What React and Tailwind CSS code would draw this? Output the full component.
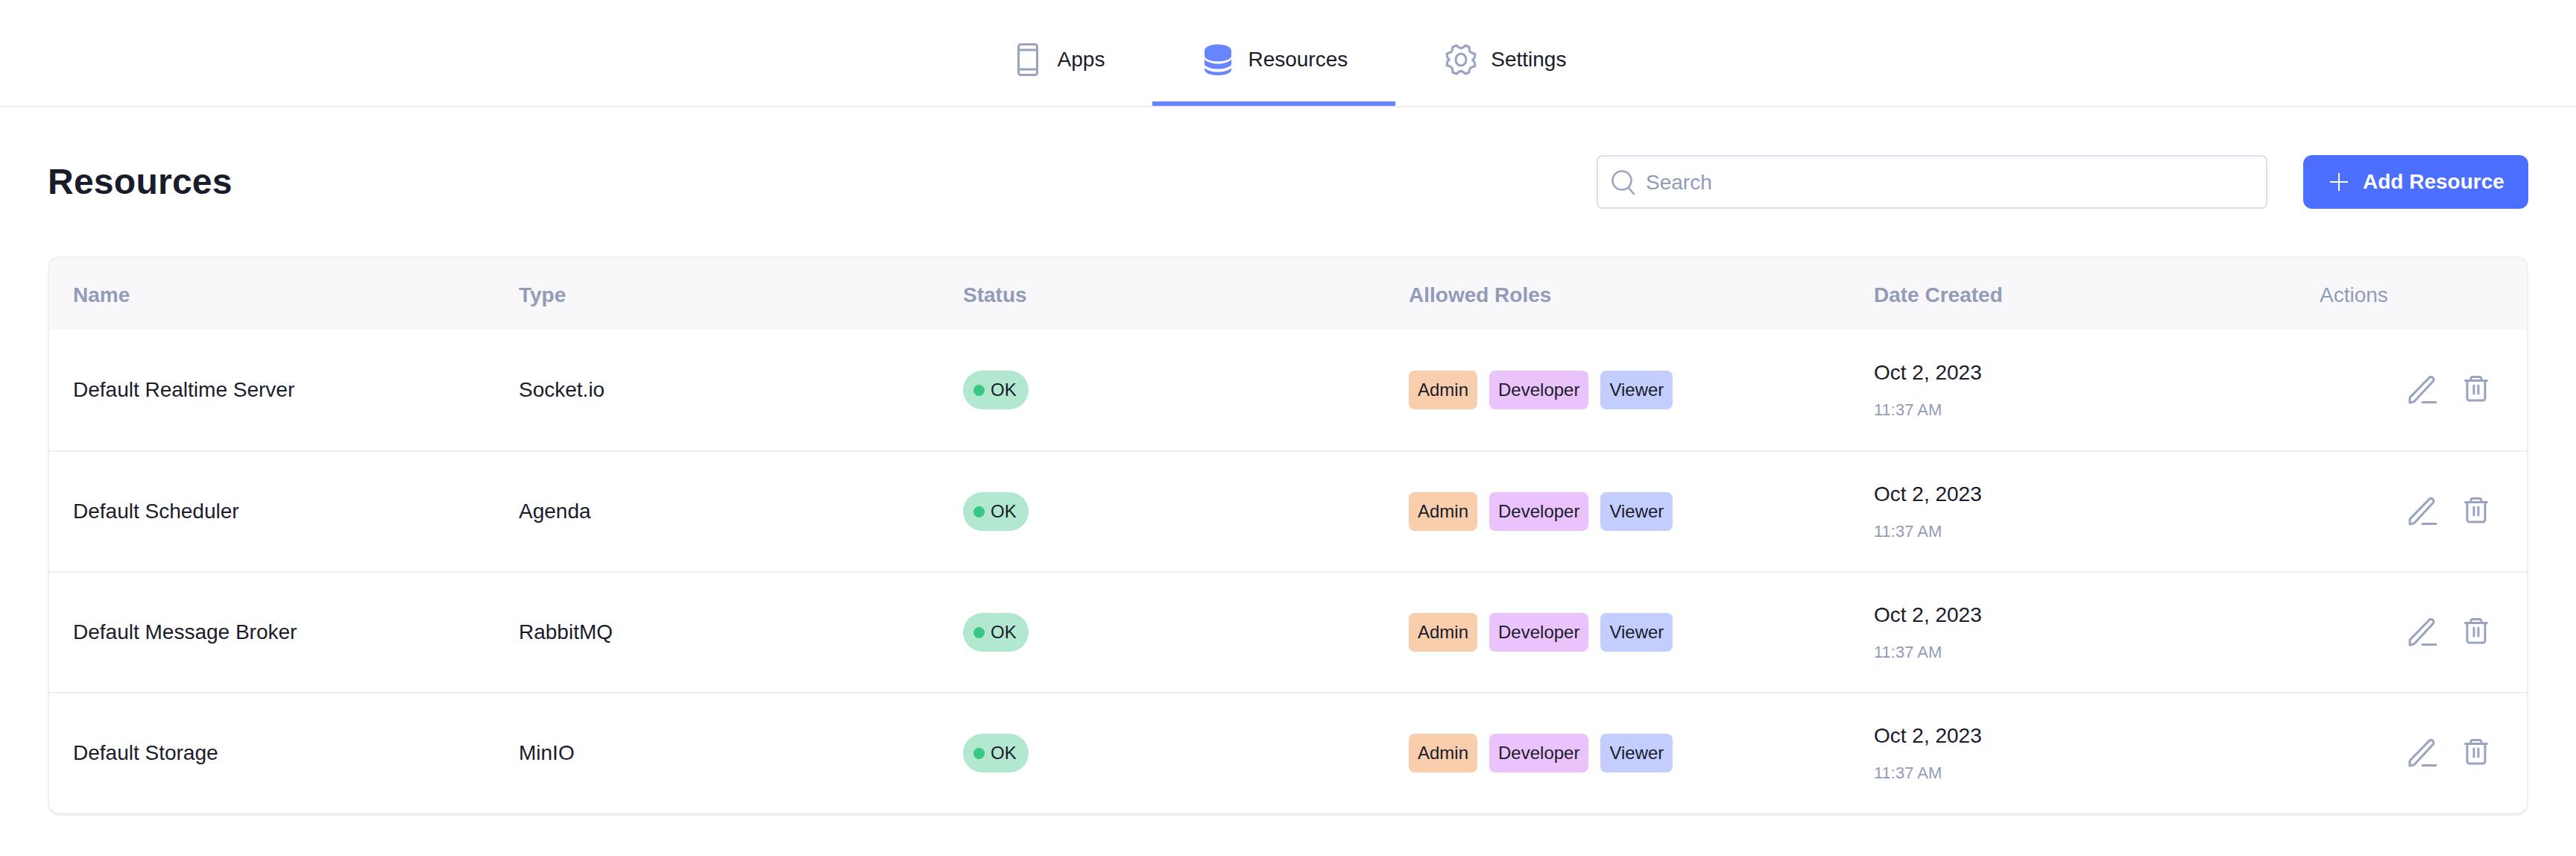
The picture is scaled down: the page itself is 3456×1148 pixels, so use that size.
import React from 'react';

const font = "font-['Liberation_Sans',Arial,sans-serif]";

const resources = [
  { name: 'Default Realtime Server', type: 'Socket.io' },
  { name: 'Default Scheduler', type: 'Agenda' },
  { name: 'Default Message Broker', type: 'RabbitMQ' },
  { name: 'Default Storage', type: 'MinIO' },
];

const PhoneIcon = () => (
  <svg width="48" height="48" viewBox="0 0 48 48" fill="none" stroke="#9aa3bf" strokeWidth="3">
    <rect x="11.5" y="3.5" width="25" height="41" rx="3" />
    <path d="M11.5 11h25M11.5 37h25" />
  </svg>
);

const DatabaseIcon = () => (
  <svg width="48" height="48" viewBox="0 0 48 48" fill="#6685ff">
    <path d="M6 12c0-5 8-8.500 18-8.500S42 7 42 12v7c0 4-8 7.500-18 7.500S6 23 6 19z" />
    <path d="M6 23.500c3 3.500 10 6 18 6s15-2.500 18-6v7.500c-3 3.500-10 5.500-18 5.500S9 34.500 6 31z" />
    <path d="M6 35c3 3.500 10 5.500 18 5.500S39 38.500 42 35v2c0 5-8 8-18 8S6 42 6 37z" />
  </svg>
);

const GearIcon = () => (
  <svg width="48" height="48" viewBox="0 0 48 48" fill="none" stroke="#9aa3bf" strokeWidth="3" strokeLinejoin="round">
    <path d="M18 5l3 2.500c2 1.500 4 1.500 6 0L30 5l5 2 .5 4.500c.3 2 1.500 3 3.500 3.500l4 1.500-1 5.500-2.500 2.500 2.500 2.500 1 5.500-4 1.500c-2 .5-3.200 1.500-3.500 3.500L35 41l-5 2-3-2.500c-2-1.500-4-1.500-6 0L18 43l-5-2-.5-4.500c-.3-2-1.500-3-3.500-3.500l-4-1.500 1-5.500L8.500 24 6 21.500l-1-5.500 4-1.500c2-.5 3.200-1.500 3.500-3.500L13 7z" />
    <ellipse cx="24" cy="24" rx="7" ry="8" />
  </svg>
);

const SearchIcon = () => (
  <svg width="36" height="36" viewBox="0 0 36 36" fill="none" stroke="#9aa3bf" strokeWidth="2.500" strokeLinecap="round" className="shrink-0">
    <circle cx="16" cy="16" r="12.500" />
    <path d="M25 26l7 8" />
  </svg>
);

const PlusIcon = () => (
  <svg width="24" height="24" viewBox="0 0 24 24" fill="none" stroke="#ffffff" strokeWidth="2">
    <path d="M12 0v24M0 12h24" />
  </svg>
);

const PencilIcon = () => (
  <svg width="48" height="48" viewBox="0 0 48 48" fill="none" stroke="#9aa3bf" strokeWidth="3" strokeLinecap="round" strokeLinejoin="round">
    <path d="M7 41v-6a2 2 0 0 1 .6-1.400L33 7.600a3.500 3.500 0 0 1 5 5L13 39.400a2 2 0 0 1-1.400.6z" />
    <path d="M24 40.500h18" />
  </svg>
);

const TrashIcon = () => (
  <svg width="48" height="48" viewBox="0 0 48 48" fill="none" stroke="#9aa3bf" strokeWidth="3" strokeLinecap="round" strokeLinejoin="round">
    <path d="M9.500 11.500h29M17 11.500V9a2.500 2.500 0 0 1 2.500-2.500h9A2.500 2.500 0 0 1 31 9v2.500" />
    <path d="M12 11.500V35a3 3 0 0 0 3 3h18a3 3 0 0 0 3-3V11.500" />
    <path d="M21 18v11M27 18v11" />
  </svg>
);

const Tab = ({ icon: Icon, label, active }) => (
  <div className={`flex items-center gap-4 px-16 pt-6 h-[142px] border-b-[6px] ${active ? 'border-[#6685ff]' : 'border-transparent'}`}>
    <Icon />
    <span className="text-[28px] text-[#1a1c2b]">{label}</span>
  </div>
);

const Role = ({ label, color }) => (
  <span className={`flex items-center h-[52px] px-[12px] rounded-lg text-[24px] text-[#1a1c2b] ${color}`}>{label}</span>
);

const ROW = 'grid grid-cols-[598px_596px_597px_625px_598px_1fr]';

export default function App() {
  return (
    <div className={`min-h-screen bg-white ${font}`}>
      {/* Top tabs */}
      <div className="flex justify-center h-[144px] border-b-2 border-[#eeeef4]">
        <Tab icon={PhoneIcon} label="Apps" />
        <Tab icon={DatabaseIcon} label="Resources" active />
        <Tab icon={GearIcon} label="Settings" />
      </div>

      <div className="px-16 pt-16">
        {/* Title, search, add */}
        <div className="flex items-center justify-between mb-16">
          <h1 className="text-[48px] font-bold tracking-[0.25px] text-[#1a1c2b]">Resources</h1>
          <div className="flex items-center gap-12">
            <div className="flex items-center gap-3 w-[900px] h-[72px] px-4 border-2 border-[#dcdfe8] rounded-lg">
              <SearchIcon />
              <input
                placeholder="Search"
                className="w-full pt-[2px] text-[28px] outline-none placeholder:text-[#929bb8]"
              />
            </div>
            <button className="flex items-center gap-[20px] w-[302px] h-[72px] pl-[36px] bg-[#4c6fff] rounded-xl text-white text-[28px] font-bold">
              <PlusIcon />
              Add Resource
            </button>
          </div>
        </div>

        {/* Table */}
        <div className="border-2 border-b-4 border-[#eeeef4] rounded-2xl overflow-hidden">
          <div className={`${ROW} items-center h-[96px] pt-[3px] bg-[#f8f8fb] text-[28px] text-[#929bb8]`}>
            <div className="pl-8 font-bold">Name</div>
            <div className="pl-8 font-bold">Type</div>
            <div className="pl-8 font-bold">Status</div>
            <div className="pl-[33px] font-bold">Allowed Roles</div>
            <div className="pl-8 font-bold">Date Created</div>
            <div className="pl-8">Actions</div>
          </div>
          {resources.map((r, i) => (
            <div
              key={r.name}
              className={`${ROW} items-center h-[162px] text-[28px] text-[#1a1c2b] ${i > 0 ? 'border-t-2 border-[#eeeef4]' : ''}`}
            >
              <div className="pl-8">{r.name}</div>
              <div className="pl-8">{r.type}</div>
              <div className="pl-8">
                <span className="inline-flex items-center gap-2 h-[52px] pl-[14px] pr-4 rounded-full bg-[#b3e8d0] text-[24px]">
                  <span className="w-[15px] h-[15px] rounded-full bg-[#38c883]" />
                  OK
                </span>
              </div>
              <div className="pl-[33px] flex gap-4">
                <Role label="Admin" color="bg-[#f9cead]" />
                <Role label="Developer" color="bg-[#ebc3fc]" />
                <Role label="Viewer" color="bg-[#c4cefe]" />
              </div>
              <div className="pl-8 pb-[3px]">
                <div>Oct 2, 2023</div>
                <div className="mt-[14px] text-[22px] leading-[30px] text-[#929bb8]">11:37 AM</div>
              </div>
              <div className="flex justify-end gap-6 pr-[44px]">
                <PencilIcon />
                <TrashIcon />
              </div>
            </div>
          ))}
        </div>
      </div>
    </div>
  );
}
